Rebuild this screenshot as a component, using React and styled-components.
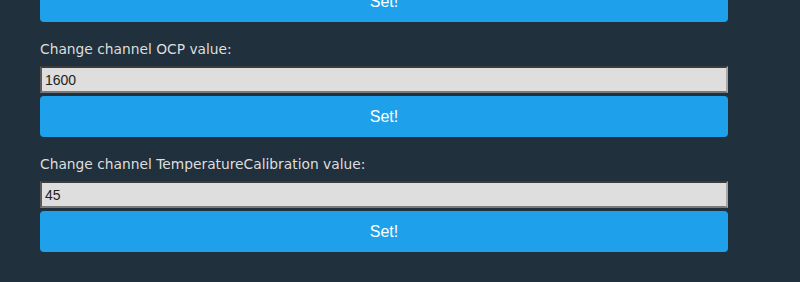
import styled, { createGlobalStyle } from "styled-components";

const GlobalStyle = createGlobalStyle`
	html, body {
		margin: 0;
		padding: 0;
		background-color: #21303d;
	}
`;

const Page = styled.div`
	display: flex;
	flex-direction: column;
	width: 800px;
	height: 282px;
	overflow: hidden;
	background-color: #21303d;
	padding: 0 72px 0 40px;
	box-sizing: border-box;
`;

const Block = styled.div`
	display: flex;
	flex-direction: column;
	padding-top: 19px;
`;

const Label = styled.label`
	font-family: "DejaVu Sans", Verdana, sans-serif;
	font-size: 13.8px;
	line-height: 17px;
	color: #dedede;
	margin-bottom: 8px;
`;

const Input = styled.input`
	box-sizing: border-box;
	height: 27px;
	width: 100%;
	margin: 0;
	padding: 0 3px;
	background-color: #dedede;
	border-style: solid;
	border-width: 2px;
	border-color: #3c3c3c #a8a8a8 #7a7a7a #5a5a5a;
	font-family: "Liberation Sans", Arial, sans-serif;
	font-size: 14px;
	color: #222;
	outline: none;
`;

const Button = styled.button`
	flex-shrink: 0;
	box-sizing: border-box;
	height: 41px;
	width: 100%;
	margin: ${(p) => (p.$top ? "-19px 0 0" : "3px 0 0")};
	border: none;
	border-radius: 4px;
	background-color: #1ea1ea;
	color: #ffffff;
	font-family: "Liberation Sans", Arial, sans-serif;
	font-size: 16px;
	cursor: pointer;
`;

const settings = [
	{ name: "OCP", value: "1600" },
	{ name: "TemperatureCalibration", value: "45" },
];

function App() {
	return (
		<>
			<GlobalStyle />
			<Page>
				<Button $top>Set!</Button>
				{settings.map((s) => (
					<Block key={s.name}>
						<Label>Change channel {s.name} value:</Label>
						<Input type="text" defaultValue={s.value} />
						<Button>Set!</Button>
					</Block>
				))}
			</Page>
		</>
	);
}

export default App;
